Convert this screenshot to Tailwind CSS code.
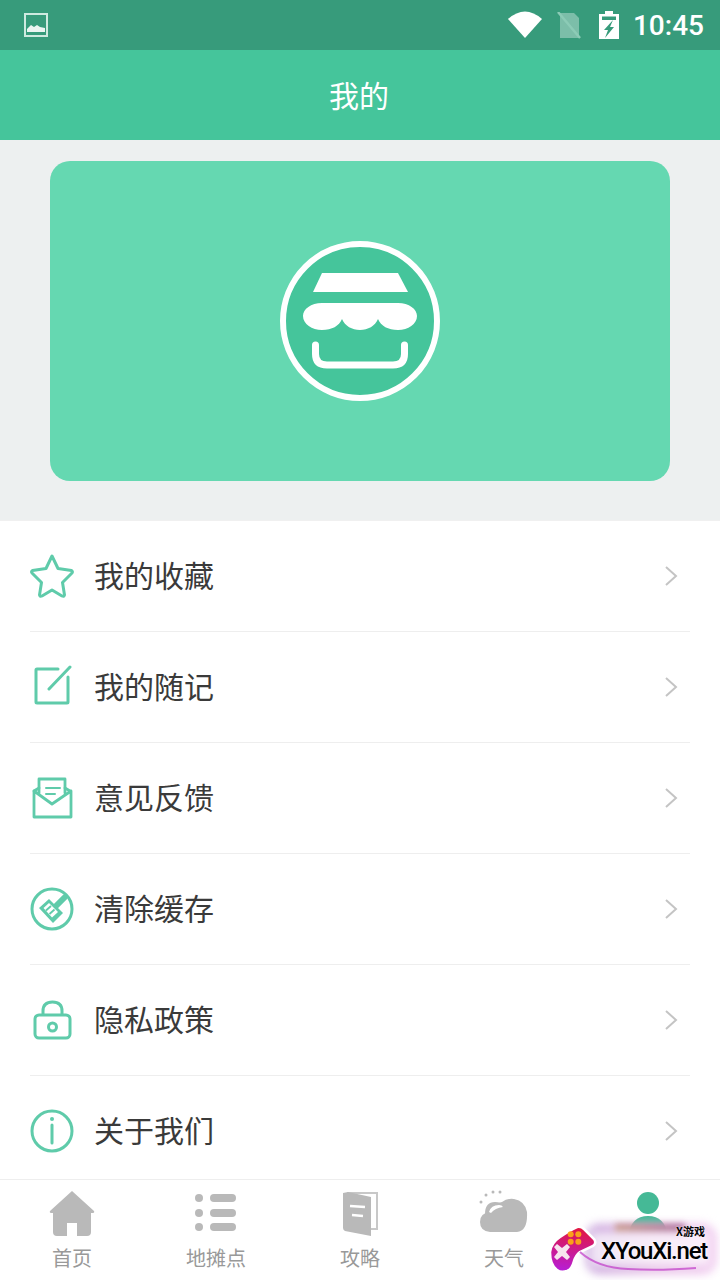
<!DOCTYPE html>
<html lang="zh-CN">

<head>
    <meta charset="UTF-8">
    <meta name="viewport" content="width=device-width, initial-scale=1.0">
    <title>我的</title>
    <script src="https://cdn.jsdelivr.net/npm/@tailwindcss/browser@4"></script>
</head>

<body class="bg-white font-['Noto_Sans_CJK_SC',sans-serif]">
    <div class="relative w-[720px] h-[1280px] overflow-hidden flex flex-col">

        <!-- Status bar -->
        <div class="h-[50px] bg-[#379b7b] flex items-center pl-[24px] pr-[16px] text-white">
            <svg width="24" height="24" viewBox="0 0 24 24" class="opacity-90">
                <rect x="1" y="1" width="22" height="22" fill="none" stroke="#dff3ec" stroke-width="2" />
                <path d="M3 19v-3l4-4 3 2 3-2 3 2 5 1v4z" fill="#fff" />
            </svg>
            <div class="flex-1"></div>
            <svg width="34" height="28" viewBox="0 0 34 28" class="mt-[-1px] ml-[1px]">
                <path d="M0 9Q17 -6 34 9L17 28z" fill="#fff" />
            </svg>
            <svg width="24" height="28" viewBox="0 0 24 28" class="ml-[15px] mt-[2px]">
                <path d="M3 1h14l5 5v20H3z" fill="#fff" opacity=".35" />
                <path d="M1 0L23 26" stroke="#8ccbb6" stroke-width="2.500" />
            </svg>
            <svg width="20" height="28" viewBox="0 0 20 28" class="ml-[18px]">
                <path d="M6 0h8v3h6v25H0V3h6z" fill="#fff" />
                <path d="M3 5.500H17V9H3z" fill="#379b7b" />
                <path d="M14 9L5 19h4l-3 8 9-11h-4l3-7z" fill="#379b7b" />
            </svg>
            <span class="ml-[14px] mt-[3px] font-['Roboto',sans-serif] font-medium text-[28px] leading-none">10:45</span>
        </div>

        <!-- Title bar -->
        <div class="h-[90px] bg-[#45c59b] flex items-center justify-center text-white text-[30px] pr-[2px]">我的</div>

        <!-- Banner -->
        <div class="h-[382px] bg-[#edf0f0] pt-[21px] px-[50px] border-b border-[#f0f0f0]">
            <div class="h-[320px] rounded-[20px] bg-[#65d8b1] flex items-center justify-center">
                <svg width="160" height="160" viewBox="0 0 160 160">
                    <circle cx="80" cy="80" r="77" fill="#45c59b" stroke="#fff" stroke-width="6" />
                    <path d="M42 32H118L128 51H33z" fill="#fff" />
                    <path d="M42 62H118C129 62 137 68 137 75C137 83 128 89 118 89C108 89 101 85 98 78C95 85 88 89 80 89C72 89 65 85 62 78C59 85 52 89 42 89C32 89 23 83 23 75C23 68 31 62 42 62z" fill="#fff" />
                    <path d="M35.500 104V113Q35.500 124 47 124H113Q124.500 124 124.500 113V104" fill="none" stroke="#fff" stroke-width="7" stroke-linecap="round" />
                </svg>
            </div>
        </div>

        <!-- Menu -->
        <div class="flex-1 px-[30px] text-[30px] text-[#3a3a3a]">
            <div class="h-[111px] flex items-center border-b border-[#eeeeee]">
                <svg width="44" height="44" viewBox="0 0 44 44" fill="none" stroke="#5fcbaa" stroke-width="3" stroke-linejoin="round">
                    <path d="M22 2L28 14.500L41.500 16.500Q43 17.500 42 19L32.500 28.500L34.500 41Q34 43 32 42L22 36L12 42Q10 43 9.500 41L11.500 28.500L2 19Q1 17.500 2.500 16.500L16 14.500z" />
                </svg>
                <span class="ml-[20px] pb-[3px] flex-1">我的收藏</span>
                <svg width="14" height="22" viewBox="0 0 14 22" fill="none" stroke="#c4c4c4" stroke-width="2" class="mr-[12px]">
                    <path d="M2 2L12 11L2 20" />
                </svg>
            </div>
            <div class="h-[111px] flex items-center border-b border-[#eeeeee]">
                <svg width="44" height="44" viewBox="0 0 44 44" fill="none" stroke="#5fcbaa" stroke-width="3" stroke-linecap="round" stroke-linejoin="round">
                    <path d="M28 4H7Q6 4 6 5V37Q6 38 7 38H37Q38 38 38 37V12" />
                    <path d="M19 24L40 2" />
                </svg>
                <span class="ml-[20px] pb-[3px] flex-1">我的随记</span>
                <svg width="14" height="22" viewBox="0 0 14 22" fill="none" stroke="#c4c4c4" stroke-width="2" class="mr-[12px]">
                    <path d="M2 2L12 11L2 20" />
                </svg>
            </div>
            <div class="h-[111px] flex items-center border-b border-[#eeeeee]">
                <svg width="44" height="44" viewBox="0 0 44 44" fill="none" stroke="#5fcbaa" stroke-width="2.800" stroke-linecap="round" stroke-linejoin="round">
                    <path d="M9 17V3H35V17" />
                    <path d="M4 15L9 12M40 15L35 12" />
                    <path d="M4 15V41H41V15L22 28z" />
                    <path d="M16 12H30M16 18H25" stroke-width="2" />
                </svg>
                <span class="ml-[20px] pb-[3px] flex-1">意见反馈</span>
                <svg width="14" height="22" viewBox="0 0 14 22" fill="none" stroke="#c4c4c4" stroke-width="2" class="mr-[12px]">
                    <path d="M2 2L12 11L2 20" />
                </svg>
            </div>
            <div class="h-[111px] flex items-center border-b border-[#eeeeee]">
                <svg width="44" height="44" viewBox="0 0 44 44">
                    <circle cx="22" cy="22" r="20" fill="none" stroke="#5fcbaa" stroke-width="3" />
                    <path d="M19 12L9 21L23 36L33 26z" fill="#5fcbaa" />
                    <path d="M24 21L34 11" stroke="#5fcbaa" stroke-width="6" stroke-linecap="round" />
                    <path d="M19 16L13.500 21L22 30.500L28 25z" fill="#fff" />
                    <path d="M16 23.500L21 19M19.500 27L24.500 22.500" stroke="#5fcbaa" stroke-width="1.800" />
                </svg>
                <span class="ml-[20px] pb-[3px] flex-1">清除缓存</span>
                <svg width="14" height="22" viewBox="0 0 14 22" fill="none" stroke="#c4c4c4" stroke-width="2" class="mr-[12px]">
                    <path d="M2 2L12 11L2 20" />
                </svg>
            </div>
            <div class="h-[111px] flex items-center border-b border-[#eeeeee]">
                <svg width="44" height="44" viewBox="0 0 44 44" fill="none" stroke="#5fcbaa" stroke-width="3">
                    <rect x="5" y="17" width="35" height="23" rx="4" />
                    <path d="M13 17V13Q13 4 22.500 4Q32 4 32 13V17" />
                    <circle cx="22.500" cy="29" r="4" />
                </svg>
                <span class="ml-[20px] pb-[3px] flex-1">隐私政策</span>
                <svg width="14" height="22" viewBox="0 0 14 22" fill="none" stroke="#c4c4c4" stroke-width="2" class="mr-[12px]">
                    <path d="M2 2L12 11L2 20" />
                </svg>
            </div>
            <div class="h-[103px] pt-[7px] flex items-center">
                <svg width="44" height="44" viewBox="0 0 44 44" fill="none" stroke="#5fcbaa" stroke-width="3">
                    <circle cx="22" cy="22" r="20" />
                    <circle cx="22" cy="10" r="2" fill="#5fcbaa" stroke="none" />
                    <path d="M22 16V34" stroke-width="3" stroke-linecap="round" />
                </svg>
                <span class="ml-[20px] pb-[3px] flex-1">关于我们</span>
                <svg width="14" height="22" viewBox="0 0 14 22" fill="none" stroke="#c4c4c4" stroke-width="2" class="mr-[12px]">
                    <path d="M2 2L12 11L2 20" />
                </svg>
            </div>
        </div>

        <!-- Tab bar -->
        <div class="h-[101px] border-t border-[#eeeeee] grid grid-cols-5 text-[20px] leading-none text-[#999999]">
            <div class="flex flex-col items-center pt-[10px]">
                <svg width="46" height="46" viewBox="0 0 46 46" fill="#b9b9b9">
                    <path d="M23 1L45 21Q46 23 43 23H42V42Q42 46 38 46H28V33H18V46H8Q4 46 4 42V23H3Q0 23 1 21z" />
                </svg>
                <span class="mt-[12px]">首页</span>
            </div>
            <div class="flex flex-col items-center pt-[10px]">
                <svg width="46" height="46" viewBox="0 0 46 46" fill="#b9b9b9">
                    <circle cx="6" cy="8" r="4" />
                    <circle cx="6" cy="23" r="4" />
                    <circle cx="6" cy="37" r="4" />
                    <rect x="17" y="4" width="26" height="8" rx="4" />
                    <rect x="17" y="19" width="26" height="8" rx="4" />
                    <rect x="17" y="33" width="26" height="8" rx="4" />
                </svg>
                <span class="mt-[12px]">地摊点</span>
            </div>
            <div class="flex flex-col items-center pt-[10px]">
                <svg width="46" height="46" viewBox="0 0 46 46">
                    <path d="M10 3H40V39H32" fill="none" stroke="#c8c8c8" stroke-width="2" />
                    <path d="M6 3L11 2L34 7V46L8 41Q6 40 6 38z" fill="#b9b9b9" />
                    <path d="M13 16L28 17M15 25L26 26" stroke="#fff" stroke-width="2.500" />
                </svg>
                <span class="mt-[12px]">攻略</span>
            </div>
            <div class="flex flex-col items-center pt-[10px]">
                <svg width="50" height="46" viewBox="0 0 50 46" fill="#b9b9b9">
                    <path d="M11 42Q1 41 1 32Q1 23 11 22Q14 13 23 12Q28 8 35 9Q46 11 48 22Q49 41 38 42z" />
                    <path d="M6 24Q6 12 16 12Q22 12 25 16Q14 16 11 25z" fill="#b9b9b9" />
                    <path d="M10 22Q12 15 20 15Q23 15 24 17Q16 18 12 23z" fill="#fff" />
                    <circle cx="2" cy="12" r="1.500" />
                    <circle cx="7" cy="5" r="1.500" />
                    <circle cx="14" cy="2" r="1.500" />
                    <circle cx="21" cy="2" r="1.500" />
                </svg>
                <span class="mt-[12px]">天气</span>
            </div>
            <div class="flex flex-col items-center pt-[10px]">
                <svg width="46" height="46" viewBox="0 0 46 46" fill="#45b996">
                    <circle cx="23" cy="13" r="11" />
                    <path d="M3 46Q6 26 23 26Q40 26 43 46z" />
                </svg>
            </div>
        </div>

        <!-- Watermark over the tab bar -->
        <div class="absolute left-[586px] top-[1224px] w-[130px] h-[50px] rounded-[14px] bg-gradient-to-r from-[#c9a5dd] via-[#e6bfe6] to-[#f0c8ef] blur-[5px]"></div>
        <div class="absolute left-[615px] top-[1224px] w-[70px] h-[9px] bg-gradient-to-r from-[#c99a8a] to-[#a86a9a] blur-[3px]"></div>
        <div class="absolute left-[590px] top-[1232px] w-[120px] h-[34px] bg-white/70 blur-[4px]"></div>
        <svg width="50" height="50" viewBox="0 0 50 50" class="absolute left-[548px] top-[1225px]">
            <defs>
                <linearGradient id="padFill" x1="0.500" y1="0" x2="0.400" y2="1">
                    <stop offset="0" stop-color="#e2173f" />
                    <stop offset="1" stop-color="#b61ed8" />
                </linearGradient>
            </defs>
            <path d="M2 27Q3 18 12 12Q22 5 29 2Q33 1 36 4L46 14Q49 18 45 21L32 27Q28 30 26 36Q24 44 19 46Q13 48 9 45Q2 40 2 27z" fill="url(#padFill)" stroke="#fff" stroke-width="2.500" />
            <path d="M6 22L9 19L14 23L19 19L22 22L18 27L22 32L19 35L14 31L9 35L6 32L10 27z" fill="#f7e4ee" />
            <circle cx="22.700" cy="9.300" r="3" fill="#f9a11b" />
            <circle cx="30.300" cy="9.300" r="3" fill="#f9a11b" />
            <circle cx="22.700" cy="16.700" r="3" fill="#f9a11b" />
            <circle cx="30.300" cy="16.700" r="3" fill="#f9a11b" />
        </svg>
        <svg width="120" height="30" viewBox="0 0 120 30" fill="none" class="absolute left-[578px] top-[1246px]">
            <path d="M2 6Q20 22 50 23Q80 25 118 22" stroke="#c03ac8" stroke-width="2" opacity=".7" />
        </svg>
        <span class="absolute left-[601px] top-[1239px] font-['Roboto',sans-serif] text-[24px] leading-[24px] font-medium tracking-[-1.2px] text-black [text-shadow:0_0_3px_#fff]">XYouXi.net</span>
        <span class="absolute left-[676px] top-[1224px] text-[11px] leading-[14px] font-bold text-black [text-shadow:0_0_2px_#fff]">X游戏</span>
    </div>
</body>

</html>
